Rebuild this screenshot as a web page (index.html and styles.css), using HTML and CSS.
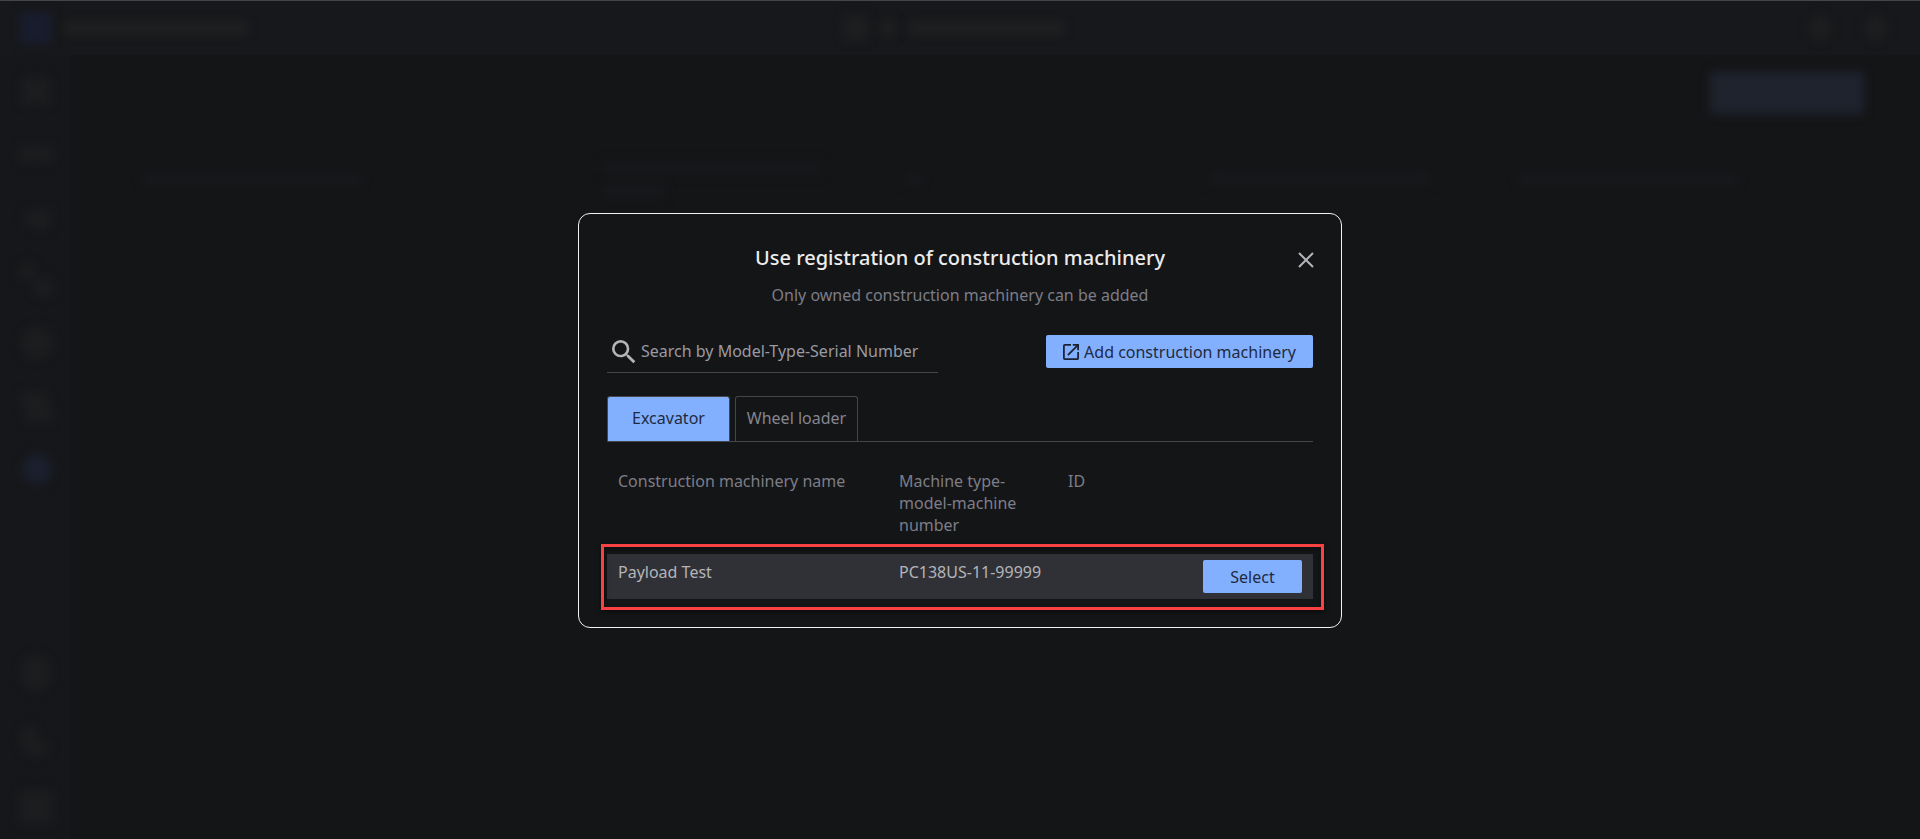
FILE: index.html
```
<!DOCTYPE html>
<html lang="en">
    <head>
        <title>Use registration of construction machinery</title>
        <meta charset="utf-8">
        <meta name="viewport" content="width=device-width, initial-scale=1">
        <link rel="stylesheet" href="styles.css">
    </head>
    <body>
        <!-- Dimmed page behind the modal -->
        <div class="page" aria-hidden="true">
            <div class="topbar">
                <div class="brand">
                    <span class="logo"></span>
                    <span class="bar brand-name"></span>
                </div>
                <div class="site">
                    <span class="icon"></span>
                    <span class="bar site-code"></span>
                    <span class="bar site-name"></span>
                </div>
                <div class="account">
                    <span class="icon round"></span>
                    <span class="icon round"></span>
                </div>
            </div>
            <div class="main">
                <div class="sidebar">
                    <svg class="nav-icon" viewBox="0 0 32 32"><rect x="2" y="3" width="28" height="26"/></svg>
                    <svg class="nav-icon" viewBox="0 0 32 32"><rect y="8" width="32" height="16"/></svg>
                    <svg class="nav-icon" viewBox="0 0 32 32"><path d="M2 18L14 8L20 12L30 6V28H14Z"/></svg>
                    <svg class="nav-icon" viewBox="0 0 32 32"><circle cx="7" cy="7" r="8"/><circle cx="23" cy="23" r="10"/></svg>
                    <svg class="nav-icon" viewBox="0 0 32 32"><circle cx="17" cy="16" r="16"/></svg>
                    <svg class="nav-icon" viewBox="0 0 32 32"><path d="M1 2H28V14H32V32H6V18H1Z"/></svg>
                    <svg class="nav-icon active" viewBox="0 0 32 32"><circle cx="17" cy="16" r="15"/></svg>
                    <div class="nav-bottom">
                        <svg class="nav-icon" viewBox="0 0 32 32"><ellipse cx="16" cy="16" rx="15" ry="18"/></svg>
                        <svg class="nav-icon" viewBox="0 0 32 32"><path d="M14 0A16 16 0 1 0 31 22L18 16Z"/></svg>
                        <svg class="nav-icon" viewBox="0 0 32 32"><rect width="32" height="32"/></svg>
                    </div>
                </div>
                <div class="content">
                    <div class="toolbar"><span class="page-action"></span></div>
                    <div class="columns">
                        <span class="bar wide"></span>
                        <span class="lines"><span class="bar wide"></span><span class="bar short"></span></span>
                        <span class="bar tiny"></span>
                        <span class="bar wide"></span>
                        <span class="bar wide"></span>
                    </div>
                </div>
            </div>
        </div>

        <!-- Modal -->
        <div class="overlay">
            <div class="modal" role="dialog" aria-modal="true" aria-labelledby="modalTitle">
                <div class="modal-header">
                    <h1 class="modal-title" id="modalTitle">Use registration of construction machinery</h1>
                    <button type="button" class="close" aria-label="Close">
                        <svg viewBox="0 0 14 14"><path d="M0 0L14 14M14 0L0 14"/></svg>
                    </button>
                </div>
                <p class="modal-note">Only owned construction machinery can be added</p>

                <div class="actions">
                    <label class="search" for="search">
                        <svg class="search-icon" viewBox="3 3 18 18"><path d="M15.5 14h-.79l-.28-.27A6.47 6.47 0 0 0 16 9.5 6.5 6.5 0 1 0 9.5 16c1.61 0 3.09-.59 4.23-1.57l.27.28v.79l5 4.99L20.49 19l-4.99-5zm-6 0C7.01 14 5 11.99 5 9.5S7.01 5 9.5 5 14 7.01 14 9.5 11.99 14 9.5 14z"/></svg>
                        <input type="text" id="search" placeholder="Search by Model-Type-Serial Number" aria-label="Search by Model-Type-Serial Number">
                    </label>
                    <button type="button" class="btn btn-add">
                        <svg class="open-icon" viewBox="3 3 18 18"><path d="M19 19H5V5h7V3H5a2 2 0 0 0-2 2v14a2 2 0 0 0 2 2h14c1.1 0 2-.9 2-2v-7h-2v7zM14 3v2h3.59l-9.83 9.83 1.41 1.41L19 6.41V10h2V3h-7z"/></svg>
                        Add construction machinery
                    </button>
                </div>

                <div class="tabs" role="tablist">
                    <button type="button" class="tab selected" role="tab" aria-selected="true">Excavator</button>
                    <button type="button" class="tab" role="tab" aria-selected="false">Wheel loader</button>
                </div>

                <table class="machines">
                    <thead>
                        <tr>
                            <th class="col-name">Construction machinery name</th>
                            <th class="col-type">Machine type-model-machine number</th>
                            <th>ID</th>
                            <th class="col-select"></th>
                        </tr>
                    </thead>
                    <tbody>
                        <tr class="highlighted">
                            <td>Payload Test</td>
                            <td>PC138US-11-99999</td>
                            <td></td>
                            <td class="select-cell"><button type="button" class="btn btn-select">Select</button></td>
                        </tr>
                    </tbody>
                </table>
            </div>
        </div>
    </body>
</html>
```
FILE: styles.css
```
* {
box-sizing: border-box;
}
body {
margin: 0;
background: #141517;
color: #b4b4b9;
font-family: "Noto Sans", sans-serif;
font-size: 16px;
line-height: 22px;
}
button, input {
font: inherit;
}

/* Page behind the modal */
.page {
display: flex;
flex-direction: column;
height: 100vh;
overflow: hidden;
border-top: 1px solid #444546;
}
.topbar {
display: grid;
grid-template-columns: 1fr auto 1fr;
align-items: center;
height: 54px;
padding: 0 32px 0 20px;
background: #17181b;
}
.brand, .site, .account {
display: flex;
align-items: center;
gap: 12px;
}
.account {
justify-content: flex-end;
gap: 32px;
}
.logo, .icon, .bar, .nav-icon, .page-action {
filter: blur(5px);
}
.logo {
width: 32px;
height: 32px;
background: #191c2d;
}
.icon {
width: 24px;
height: 24px;
background: #1d1e1f;
}
.round {
border-radius: 50%;
}
.bar {
display: block;
height: 14px;
background: #1e1f20;
}
.brand-name {
width: 184px;
}
.site-code {
width: 16px;
}
.site-name {
width: 156px;
}
.main {
display: flex;
flex: 1;
}
.sidebar {
display: flex;
flex-direction: column;
gap: 31px;
width: 70px;
padding: 20px;
background: #16171a;
}
.nav-icon {
width: 32px;
height: 32px;
overflow: visible;
fill: #1c1d1f;
}
.nav-icon.active {
fill: #1a202d;
}
.nav-bottom {
display: flex;
flex-direction: column;
gap: 35px;
margin-top: auto;
margin-bottom: -4px;
}
.content {
flex: 1;
}
.toolbar {
display: flex;
justify-content: flex-end;
padding: 17px 56px;
}
.page-action {
width: 154px;
height: 42px;
background: #1e232e;
}
.columns {
display: grid;
grid-template-columns: 460px 304px 304px 308px 1fr;
align-items: center;
padding: 30px 72px;
}
.columns .bar {
height: 14px;
background: #17181b;
}
.columns .wide {
width: 220px;
}
.columns .short {
width: 64px;
}
.columns .tiny {
width: 16px;
}
.lines {
display: grid;
gap: 8px;
}

/* Modal */
.overlay {
position: fixed;
inset: 2px 0 0;
display: flex;
align-items: center;
justify-content: center;
}
.modal {
width: 764px;
max-width: 100%;
padding: 28px;
background: #141517;
border: 1px solid #f2f2f2;
border-radius: 12px;
}
.modal-header {
display: grid;
grid-template-columns: 14px 1fr 14px;
align-items: center;
}
.modal-title {
grid-column: 2;
margin: 0;
color: #ececec;
font-size: 20px;
font-weight: 500;
line-height: 32px;
text-align: center;
}
.close {
display: flex;
padding: 4px 0 0;
border: 0;
background: none;
cursor: pointer;
}
.close svg {
width: 14px;
height: 14px;
overflow: visible;
fill: none;
stroke: #b4b4b9;
stroke-width: 2;
}
.modal-note {
margin: 10px 0 29px;
color: #7d7d88;
text-align: center;
}
.actions {
display: flex;
align-items: flex-start;
justify-content: space-between;
}
.search {
display: flex;
align-items: flex-start;
gap: 5px;
width: 331px;
height: 38px;
padding: 5px 0 0 5px;
border-bottom: 1px solid #45454c;
}
.search-icon {
width: 24px;
height: 24px;
fill: #b4b4b9;
}
.search input {
flex: 1;
min-width: 0;
height: 22px;
padding: 0;
border: 0;
outline: 0;
background: none;
color: #b4b4b9;
}
.search input::placeholder {
color: #9a9aa3;
opacity: 1;
}
.btn {
height: 33px;
padding: 0;
border: 0;
border-radius: 2px;
background: #82b0ff;
color: #1f2a40;
cursor: pointer;
}
.btn-add {
display: flex;
align-items: center;
justify-content: center;
gap: 5px;
width: 267px;
}
.open-icon {
width: 16px;
height: 16px;
fill: #1b2233;
}
.btn-select {
display: block;
width: 99px;
padding-top: 1px;
}
.tabs {
display: flex;
gap: 5px;
margin-top: 23px;
border-bottom: 1px solid #45454c;
}
.tab {
width: 123px;
height: 45px;
padding: 0 0 2px;
border: 1px solid #45454c;
border-bottom: 0;
border-radius: 3px 3px 0 0;
background: none;
color: #85858f;
cursor: pointer;
}
.tab.selected {
background: #82b0ff;
color: #1f2a40;
}
.machines {
width: 100%;
margin-top: 28px;
border-collapse: collapse;
table-layout: fixed;
}
.machines th {
padding: 0 11px 18px;
color: #7d7d88;
font-weight: 400;
text-align: left;
vertical-align: top;
}
.machines td {
height: 45px;
padding: 7px 11px 0;
background: #303136;
vertical-align: top;
}
.machines .select-cell {
padding: 6px 11px 6px 0;
}
.col-name {
width: 281px;
}
.col-type {
width: 169px;
}
.col-select {
width: 110px;
}
/* Red frame around the machine to pick */
.highlighted {
position: relative;
}
.highlighted .select-cell::after {
content: "";
position: absolute;
inset: -10px -11px -11px -6px;
border: 3px solid #fb4141;
box-shadow: 0 2px 5px rgba(0, 0, 0, 0.5), inset 0 2px 5px rgba(0, 0, 0, 0.4);
pointer-events: none;
}
```
